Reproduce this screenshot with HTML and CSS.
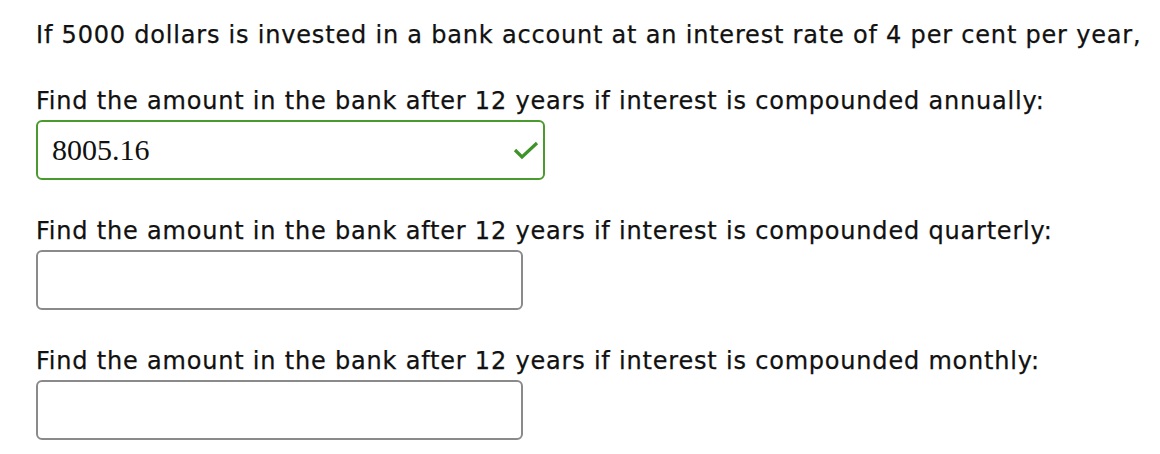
FILE: index.html
```html
<!DOCTYPE html>
<html lang="en">
<head>
<meta charset="UTF-8">
<title>Compound Interest</title>
<link rel="stylesheet" href="styles.css">
</head>
<body>
<div class="question">
  <p class="intro">If 5000 dollars is invested in a bank account at an interest rate of 4 per cent per year,</p>

  <!-- Part 1 -->
  <div class="part">
    <p class="prompt">Find the amount in the bank after 12 years if interest is compounded annually:</p>
    <div class="answer correct">
      <input type="text" value="8005.16">
      <svg class="check" width="26" height="20" viewBox="0 0 26 20">
        <polyline points="2,10 9,17 24,3" fill="none" stroke="#3f9429" stroke-width="3.2"/>
      </svg>
    </div>
  </div>

  <!-- Part 2 -->
  <div class="part">
    <p class="prompt">Find the amount in the bank after 12 years if interest is compounded quarterly:</p>
    <div class="answer">
      <input type="text" value="">
    </div>
  </div>

  <!-- Part 3 -->
  <div class="part">
    <p class="prompt">Find the amount in the bank after 12 years if interest is compounded monthly:</p>
    <div class="answer">
      <input type="text" value="">
    </div>
  </div>
</div>
</body>
</html>
```

FILE: styles.css
```css
body {
  margin: 0;
  padding: 0;
  background: #fff;
  color: #111;
  font-family: "DejaVu Sans", sans-serif;
  font-size: 24px;
  letter-spacing: 0.8px;
  -webkit-text-stroke: 0.25px #111;
}
.question {
  padding: 20px 0 0 36px;
}
.intro {
  margin: 0 0 36px;
  line-height: 30px;
}
.prompt {
  margin: 0 0 4px;
  line-height: 30px;
  white-space: nowrap;
}
.part {
  margin-bottom: 36px;
}
.part:last-child {
  margin-bottom: 0;
}
.answer {
  display: flex;
  align-items: center;
  width: 487px;
  height: 60px;
  box-sizing: border-box;
  border: 2px solid #8a8a8a;
  border-radius: 6px;
  background: #fff;
}
.answer.correct {
  width: 509px;
  border-color: #4a9a2e;
}
.answer input {
  flex: 1;
  min-width: 0;
  height: 100%;
  border: none;
  outline: none;
  background: transparent;
  padding: 0 0 0 14px;
  font-family: "Liberation Serif", serif;
  font-size: 30px;
  letter-spacing: 0;
  -webkit-text-stroke: 0;
  color: #111;
}
.check {
  margin-right: 4px;
  flex-shrink: 0;
}
```
